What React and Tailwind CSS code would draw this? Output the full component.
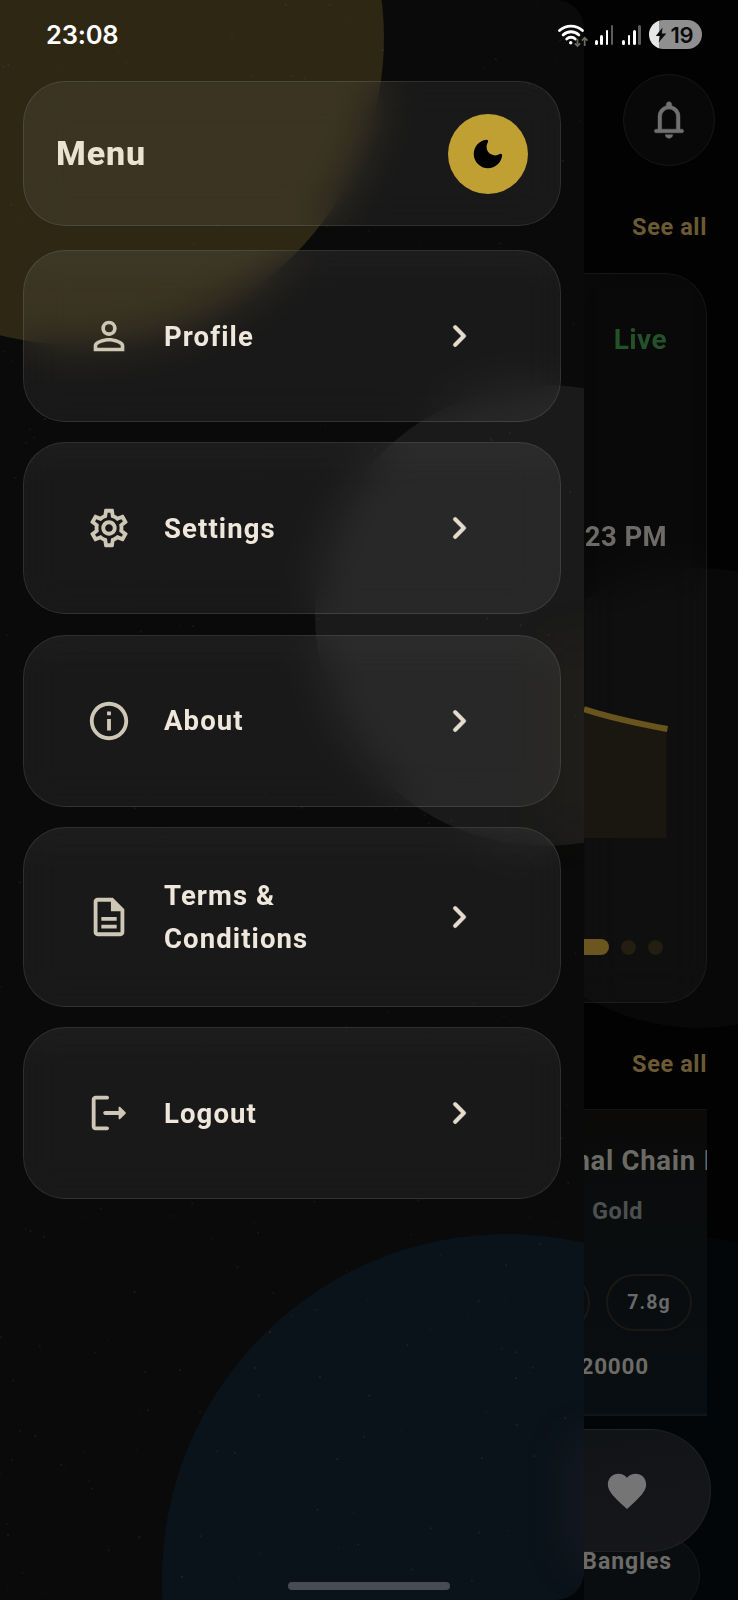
import React from "react";
import {
  MdPersonOutline,
  MdOutlineSettings,
  MdInfoOutline,
  MdOutlineDescription,
  MdFavorite,
} from "react-icons/md";

const LogoutIcon = ({ className }) => (
  <svg viewBox="0 0 24 24" fill="currentColor" className={className}>
    <path d="M5 5h6c.55 0 1-.45 1-1s-.45-1-1-1H5c-1.1 0-2 .9-2 2v14c0 1.1.9 2 2 2h6c.55 0 1-.45 1-1s-.45-1-1-1H5V5z" />
    <path d="M20.65 11.65l-2.79-2.79a.501.501 0 0 0-.86.35V11h-7c-.55 0-1 .45-1 1s.45 1 1 1h7v1.79c0 .45.54.67.85.35l2.79-2.79c.2-.19.2-.51.01-.7z" />
  </svg>
);

const ChevronIcon = ({ className }) => (
  <svg viewBox="0 0 24 24" fill="currentColor" stroke="currentColor" className={className}>
    <path d="M9.29 15.88 13.17 12 9.29 8.12a.996.996 0 1 1 1.41-1.41l4.59 4.59c.39.39.39 1.02 0 1.41L10.7 17.3a.996.996 0 0 1-1.41 0c-.38-.39-.39-1.03 0-1.42z" />
  </svg>
);

const MoonIcon = ({ className }) => (
  <svg viewBox="0 0 24 24" fill="currentColor" className={className}>
    <path d="M11.01 3.05C6.51 3.54 3 7.36 3 12a9 9 0 0 0 9 9c4.63 0 8.45-3.5 8.95-8 .09-.79-.78-1.42-1.54-.95A5.403 5.403 0 0 1 11.1 7.5c0-1.06.31-2.06.84-2.89.45-.67-.04-1.63-.93-1.56z" />
  </svg>
);

const BellIcon = ({ className }) => (
  <svg viewBox="0 -960 960 960" fill="currentColor" stroke="currentColor" className={className}>
    <path d="M200-200q-17 0-28.500-11.500T160-240q0-17 11.500-28.500T200-280h40v-280q0-83 50-147.500T420-792v-28q0-25 17.500-42.500T480-880q25 0 42.500 17.500T540-820v28q80 20 130 84.500T720-560v280h40q17 0 28.500 11.500T800-240q0 17-11.500 28.500T760-200H200ZM480-80q-33 0-56.500-23.500T400-160h160q0 33-23.500 56.500T480-80ZM320-280h320v-280q0-66-47-113t-113-47q-66 0-113 47t-47 113v280Z" />
  </svg>
);

const SignalBars = () => (
  <div className="flex h-5 items-end gap-[2.6px]">
    <div className="h-[5px] w-[2.7px] rounded-full bg-white" />
    <div className="h-[10px] w-[2.7px] rounded-full bg-white" />
    <div className="h-[15px] w-[2.7px] rounded-full bg-white" />
    <div className="h-5 w-[2.7px] rounded-full bg-[#5c5c5c]" />
  </div>
);

const StatusBar = () => (
  <div className="absolute inset-x-0 top-0 flex h-[69px] items-center justify-between pl-[46px] pr-[36px] font-['Inter',sans-serif]">
    <span className="mt-px text-[25.5px] font-semibold tracking-[-0.2px] text-white">23:08</span>
    <div className="flex items-center">
      <svg viewBox="0 0 32 26" className="h-[26px] w-8" fill="none">
        <g stroke="#fff" strokeWidth="2.8" strokeLinecap="round">
          <path d="M2.500 8.600a16.800 16.800 0 0 1 23 0" />
          <path d="M6.100 12.900a11.500 11.500 0 0 1 15.800 0" />
          <path d="M9.700 17a6.200 6.200 0 0 1 8.600 0" />
        </g>
        <circle cx="13.700" cy="20.700" r="1.700" fill="#fff" />
        <g stroke="#6b6b62" strokeWidth="1.700">
          <path d="M20.500 17v7m-2.600-2.700 2.600 2.700 2.600-2.700" />
          <path d="M27.700 24v-8.200m-2.800 2.900 2.800-2.900 2.800 2.900" />
        </g>
      </svg>
      <div className="ml-[5.5px] flex gap-[9px]">
        <SignalBars />
        <SignalBars />
      </div>
      <div className="ml-[8px] flex h-[29px] w-[53px] items-center overflow-hidden rounded-full bg-[linear-gradient(90deg,#e6e6e6_10px,#8f8f8f_10px)] pl-[6px]">
        <svg viewBox="0 0 12 16" className="h-4 w-3" fill="#0b0b0b">
          <path d="M7.500.5.800 9h4.200L3.600 15.500 11.300 6.500H6.800z" />
        </svg>
        <span className="ml-[3.5px] text-[22px] font-semibold leading-none tracking-[-0.3px] text-[#0b0b0b]">
          19
        </span>
      </div>
    </div>
  </div>
);

// Tiny specks scattered over the drawer background
let seed = 7;
const rand = () => {
  seed = (seed * 16807) % 2147483647;
  return seed / 2147483647;
};
const specks = Array.from({ length: 420 }, () => ({
  x: rand() * 584,
  y: rand() * 1600,
  o: 0.02 + rand() * 0.05,
}));

const menuItems = [
  { label: "Profile", icon: MdPersonOutline },
  { label: "Settings", icon: MdOutlineSettings },
  { label: "About", icon: MdInfoOutline },
  { label: "Terms &\nConditions", icon: MdOutlineDescription, tall: true },
  { label: "Logout", icon: LogoutIcon },
];

const MenuCard = ({ item }) => {
  const Icon = item.icon;
  return (
    <button
      className={`flex w-full shrink-0 items-center rounded-[42px] border-[1.5px] border-white/10 bg-white/[0.063] bg-[linear-gradient(180deg,rgba(255,255,255,0.015),transparent_25%)] pl-[62px] pr-[78px] text-left backdrop-blur-[20px] ${
        item.tall ? "h-[180px]" : "h-[172px]"
      }`}
    >
      <Icon className="h-[46px] w-[46px] text-[#cfc7b6]" />
      <span className="ml-8 flex-1 whitespace-pre-line pt-[2px] text-[27.5px] font-bold leading-[42.5px] tracking-[1.1px] text-[#efe7db]">
        {item.label}
      </span>
      <ChevronIcon className="h-[46px] w-[46px] stroke-[0.2] text-[#e6dccd]" />
    </button>
  );
};

const Drawer = () => (
  <div className="absolute left-0 top-0 h-full w-[584px] overflow-hidden rounded-r-[28px] bg-[#0a0a0a]">
    <div className="absolute left-[-230px] top-[-269px] h-[614px] w-[614px] rounded-full bg-[#2e2714]" />
    <div className="absolute left-[315px] top-[385px] h-[461px] w-[461px] rounded-full bg-[#1a1a1a]" />
    <div className="absolute left-[162px] top-[1234px] h-[690px] w-[690px] rounded-full bg-[#0b131a]" />
    <div className="absolute left-[550px] top-[640px] h-[190px] w-[80px] bg-[#6b4a1a]/8 blur-[22px]" />
    <div className="absolute left-[570px] top-[1440px] h-[120px] w-[60px] bg-[#3a3040]/20 blur-[20px]" />
    <svg viewBox="0 0 584 1600" className="absolute inset-0 h-full w-full" fill="#fff">
      {specks.map((s, i) => (
        <circle key={i} cx={s.x} cy={s.y} r="1.1" opacity={s.o} />
      ))}
    </svg>

    <div className="flex flex-col px-[23px] pt-[81px]">
      <div className="flex h-[145px] items-center justify-between rounded-[42px] border-[1.5px] border-white/10 bg-white/[0.063] pl-[32px] pr-[32px] backdrop-blur-[20px]">
        <h1 className="text-[34px] font-extrabold tracking-[0.9px] text-[#ece2d2]">Menu</h1>
        <button className="flex h-20 w-20 items-center justify-center rounded-full bg-[#c1a033]">
          <MoonIcon className="h-[38px] w-[38px] text-black" />
        </button>
      </div>

      <div className="mt-6 flex flex-col gap-[20.3px]">
        {menuItems.map((item) => (
          <MenuCard key={item.label} item={item} />
        ))}
      </div>
    </div>
  </div>
);

const RateCard = () => (
  <div className="relative -ml-12 mr-[31px] mt-[31px] flex h-[730px] shrink-0 flex-col rounded-[42px] border-[1.5px] border-white/[0.06] bg-white/[0.033] pr-[39px] text-right backdrop-blur-[20px]">
    <p className="mt-[50px] text-[28px] font-bold leading-8 tracking-[0.4px] text-[#23522a]">
      Live
    </p>
    <p className="mt-[165px] text-[27.5px] font-bold leading-8 tracking-[0.4px] text-[#6d6b68]">
      23 PM
    </p>
    <svg viewBox="0 0 84 136" className="ml-[47px] mt-[149px] h-[136px] w-[84px]" fill="none">
      <path d="M0 7q30 10 82.500 20v109H0z" fill="#1a1710" />
      <path d="M0 7q30 10 83.500 20" stroke="#69541d" strokeWidth="6" />
    </svg>
    <div className="mr-[4px] mt-[101px] flex items-center justify-end gap-[12px]">
      <div className="h-4 w-12 rounded-full bg-[#6a561e]" />
      <div className="h-[15px] w-[15px] rounded-full bg-[#231d12]" />
      <div className="h-[15px] w-[15px] rounded-full bg-[#231d12]" />
    </div>
  </div>
);

const ProductCard = () => (
  <div className="relative mr-[31px] mt-[30px] h-[307px] shrink-0 overflow-hidden border-b-2 border-t border-b-[#11161a] border-t-[#141210] bg-[linear-gradient(180deg,#0b0a09,#0a0c0d_30%,#090e12)]">
    <p className="mt-[35px] -ml-[9.5px] whitespace-nowrap text-[27.5px] font-bold leading-8 tracking-[0.7px] text-[#6c6a64]">
      nal Chain I
    </p>
    <p className="ml-[8px] mt-[20px] text-[23.5px] font-bold leading-7 tracking-[0.6px] text-[#4d5051]">
      Gold
    </p>
    <div className="-ml-[80px] mt-[49px] flex gap-4">
      <div className="h-[57px] w-[86px] shrink-0 rounded-full border-2 border-[#191812]" />
      <div className="flex h-[57px] w-[86px] shrink-0 items-center justify-center rounded-full border-2 border-[#191812] text-[19.5px] font-bold tracking-[1.1px] text-[#67696a]">
        7.8g
      </div>
    </div>
    <p className="-ml-6 mr-[58px] mt-[19px] text-right text-[22.5px] font-bold leading-8 tracking-[0.8px] text-[#6c6b67]">
      20000
    </p>
  </div>
);

const HomeScreen = () => (
  <div className="absolute inset-0 overflow-hidden bg-[#020202]">
    <div className="absolute left-[470px] top-[568px] h-[460px] w-[460px] rounded-full bg-[#080808]" />
    <div className="absolute left-[316px] top-[1234px] h-[690px] w-[690px] rounded-full bg-[#020608]" />

    <div className="ml-auto flex h-full w-[154px] flex-col overflow-hidden">
      <div className="relative ml-[39px] mt-[74px] flex h-[92px] w-[92px] shrink-0 items-center justify-center rounded-full border-[1.5px] border-[#161616] bg-[#080808]">
        <BellIcon className="h-[44px] w-[44px] stroke-[10] text-[#707070]" />
      </div>
      <p className="relative mr-[31px] mt-[46px] text-right text-[23.5px] font-bold leading-[30px] tracking-[0.6px] text-[#6b5a33]">
        See all
      </p>
      <RateCard />
      <p className="relative mr-[31px] mt-[46px] text-right text-[23.5px] font-bold leading-[30px] tracking-[0.6px] text-[#6b5a33]">
        See all
      </p>
      <ProductCard />
      <div className="relative z-10 -ml-24 mr-[27px] mt-[13px] flex h-[123px] shrink-0 items-center justify-end rounded-full border-[1.5px] border-white/[0.05] bg-[linear-gradient(170deg,#101316,#17171a)] pr-[60px]">
        <MdFavorite className="h-[46px] w-[46px] text-[#757575]" />
      </div>
      <div className="relative -ml-12 mr-[38px] -mt-[17px] flex h-[80px] shrink-0 items-center justify-end rounded-full border-[1.5px] border-[#14191d] bg-[#090d10] pr-[27px]">
        <span className="-mt-[26px] text-[23px] font-bold tracking-[0.9px] text-[#6c6b67]">Bangles</span>
      </div>
    </div>
  </div>
);

const App = () => {
  return (
    <div className="relative h-[1600px] w-[738px] overflow-hidden bg-black font-['Roboto',sans-serif]">
      <HomeScreen />
      <Drawer />
      <StatusBar />
      <div className="absolute bottom-[10px] left-[288px] h-2 w-[162px] rounded-full bg-[#454c53]" />
    </div>
  );
};

export default App;
